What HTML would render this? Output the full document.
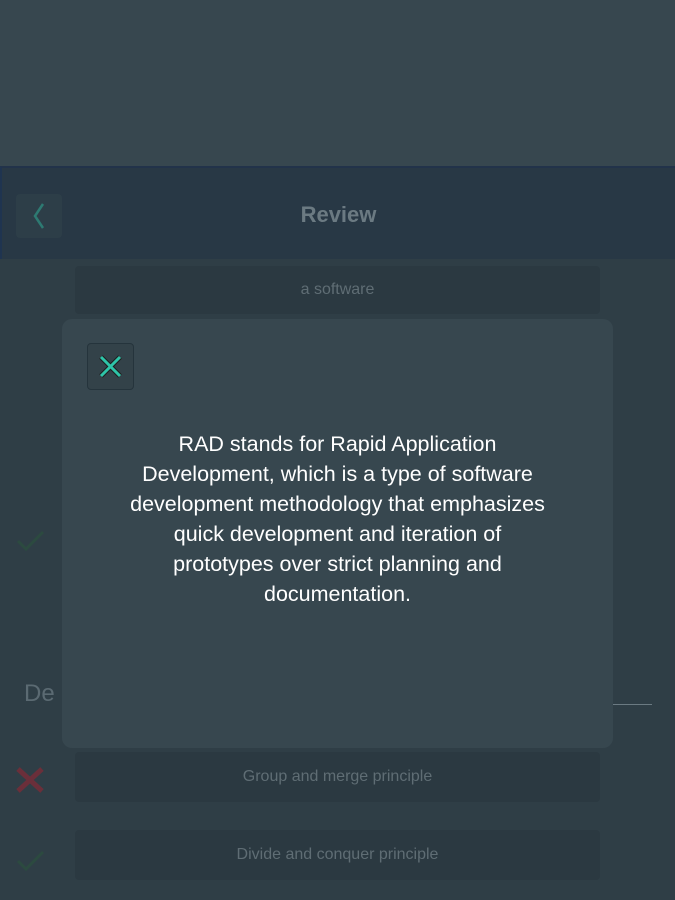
<!DOCTYPE html>
<html><head><meta charset="utf-8"><style>
*{margin:0;padding:0;box-sizing:border-box}
body{width:675px;height:900px;background:#2f3e46;position:relative;overflow:hidden;font-family:"Liberation Sans",sans-serif}
.top{position:absolute;left:0;top:0;width:675px;height:166px;background:#37474f}
.hdr{position:absolute;left:0;top:166px;width:675px;height:93px;background:#283845;border-top:2px solid #22334a;border-left:2px solid #1f3450}
.back{position:absolute;left:14px;top:26px;width:46px;height:44px;background:#2d3e48;border-radius:4px}
.title{position:absolute;left:0;right:0;top:34px;text-align:center;color:#6b7a82;font-size:22px;font-weight:bold}
.item{position:absolute;left:75px;width:525px;background:#2b3941;color:#5f6d74;text-align:center;font-size:16px;border-radius:4px}
.modal{position:absolute;left:62px;top:319px;width:551px;height:429px;background:#37474f;border-radius:10px}
.close{position:absolute;left:25px;top:24px;width:47px;height:47px;border:1px solid #25343c;border-radius:4px;background:#334249}
.text{position:absolute;left:0;right:0;top:110px;text-align:center;color:#fff;font-size:21.5px;line-height:30px;white-space:nowrap}
</style></head><body>
<div class="top"></div>
<div class="hdr"><div class="back"><svg width="46" height="44"><path d="M27 10 L19 22 L27 34" stroke="#2d7a72" stroke-width="2.5" fill="none"/></svg></div><div class="title">Review</div></div>
<div class="item" style="top:266px;height:48px;line-height:48px">a software</div>
<svg style="position:absolute;left:15px;top:527px" width="32" height="28"><path d="M3 14 L11 22 L28 5" stroke="#2c4a40" stroke-width="3" fill="none"/></svg>
<div style="position:absolute;left:24px;top:680px;color:#5b6a72;font-size:24px">De</div>
<div style="position:absolute;left:610px;top:704px;width:42px;height:1px;background:#6b7a82"></div>
<div class="item" style="top:752px;height:50px;line-height:50px">Group and merge principle</div>
<svg style="position:absolute;left:14px;top:765px" width="32" height="30"><path d="M4 4 L28 26 M28 4 L4 26" stroke="#6a2f3a" stroke-width="5" fill="none"/></svg>
<div class="item" style="top:830px;height:50px;line-height:50px">Divide and conquer principle</div>
<svg style="position:absolute;left:15px;top:847px" width="32" height="28"><path d="M3 14 L11 22 L28 5" stroke="#2c4a40" stroke-width="3" fill="none"/></svg>
<div class="modal">
<div class="close"><svg width="45" height="45"><path d="M13 13 L32 32 M32 13 L13 32" stroke="#1e1e1e" stroke-width="5" fill="none"/><path d="M13 13 L32 32 M32 13 L13 32" stroke="#2ec4a8" stroke-width="3" fill="none"/></svg></div>
<div class="text">RAD stands for Rapid Application<br>Development, which is a type of software<br>development methodology that emphasizes<br>quick development and iteration of<br>prototypes over strict planning and<br>documentation.</div>
</div>
</body></html>
